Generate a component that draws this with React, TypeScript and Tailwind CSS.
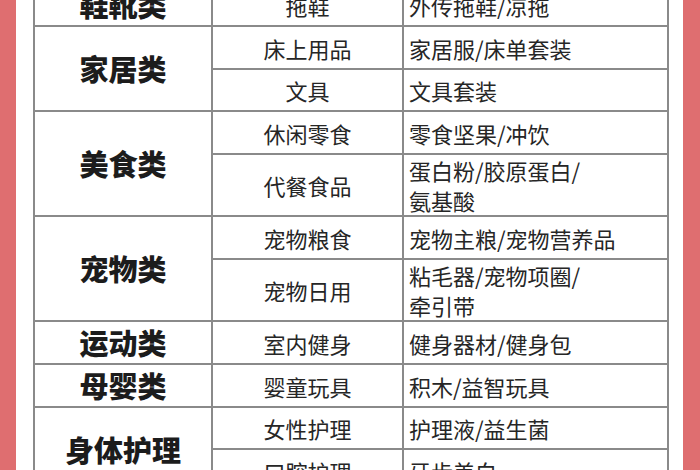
import React from 'react'

type Sub = { name: string; items: React.ReactNode; h: string }
type Group = { cat: string; subs: Sub[] }

const groups: Group[] = [
    { cat: '鞋靴类', subs: [{ name: '拖鞋', items: '外传拖鞋/凉拖', h: 'h-[43px]' }] },
    {
        cat: '家居类',
        subs: [
            { name: '床上用品', items: '家居服/床单套装', h: 'h-[43px]' },
            { name: '文具', items: '文具套装', h: 'h-[42px]' },
        ],
    },
    {
        cat: '美食类',
        subs: [
            { name: '休闲零食', items: '零食坚果/冲饮', h: 'h-[43px]' },
            { name: '代餐食品', items: <>蛋白粉/胶原蛋白/<br />氨基酸</>, h: 'h-[62px]' },
        ],
    },
    {
        cat: '宠物类',
        subs: [
            { name: '宠物粮食', items: '宠物主粮/宠物营养品', h: 'h-[43px]' },
            { name: '宠物日用', items: <>粘毛器/宠物项圈/<br />牵引带</>, h: 'h-[62px]' },
        ],
    },
    { cat: '运动类', subs: [{ name: '室内健身', items: '健身器材/健身包', h: 'h-[43px]' }] },
    { cat: '母婴类', subs: [{ name: '婴童玩具', items: '积木/益智玩具', h: 'h-[43px]' }] },
    {
        cat: '身体护理',
        subs: [
            { name: '女性护理', items: '护理液/益生菌', h: 'h-[42px]' },
            { name: '口腔护理', items: '牙齿美白', h: 'h-[43px]' },
        ],
    },
]

const App = () => {
    return (
        <div className="w-[700px] h-[470px] overflow-hidden bg-[#df6e70] flex">
            <div className="ml-[16px] w-[667px] h-full bg-white pl-[17px] pr-[16px] overflow-hidden font-['Noto_Sans_CJK_SC',sans-serif] text-[#1c1c1c]">
                <table className="mt-[-18px] w-[634px] table-fixed border-collapse border-2 border-[#8a8a8a]">
                    <colgroup>
                        <col className="w-[178px]" />
                        <col className="w-[191px]" />
                        <col className="w-[265px]" />
                    </colgroup>
                    <tbody>
                        {groups.map((g) =>
                            g.subs.map((s, i) => (
                                <tr key={g.cat + s.name} className={s.h}>
                                    {i === 0 && (
                                        <td
                                            rowSpan={g.subs.length}
                                            className="border-2 border-[#8a8a8a] text-center align-middle text-[29px] font-black leading-none"
                                        >
                                            {g.cat}
                                        </td>
                                    )}
                                    <td className="border-2 border-[#8a8a8a] p-0 text-center align-middle text-[22px] leading-[30px] text-[#262626]">
                                        {s.name}
                                    </td>
                                    <td className="border-2 border-[#8a8a8a] p-0 pl-[5px] text-left align-middle text-[22px] leading-[30px] text-[#262626]">
                                        {s.items}
                                    </td>
                                </tr>
                            ))
                        )}
                    </tbody>
                </table>
            </div>
        </div>
    )
}

export default App
